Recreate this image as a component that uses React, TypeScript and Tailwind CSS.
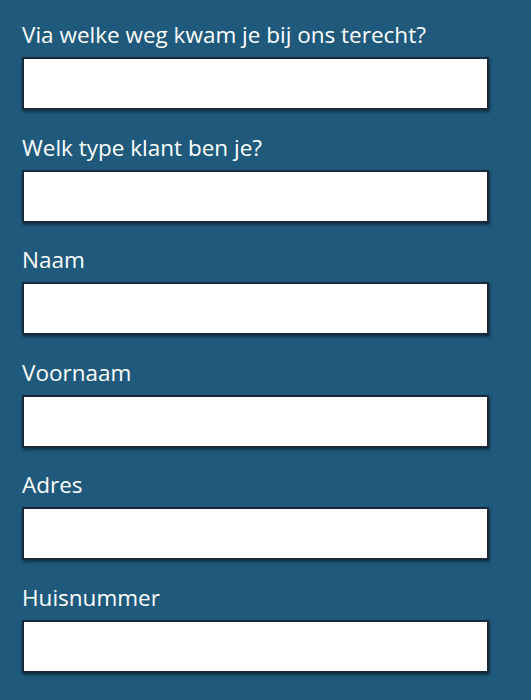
const fields = [
  "Via welke weg kwam je bij ons terecht?",
  "Welk type klant ben je?",
  "Naam",
  "Voornaam",
  "Adres",
  "Huisnummer",
];

export default function App() {
  return (
    <div
      className="min-h-[700px] w-[531px] overflow-hidden bg-[#1f5a7c] px-[22px] pt-[20px]"
      style={{ fontFamily: '"Open Sans", "Noto Sans", sans-serif' }}
    >
      {fields.map((label) => (
        <div key={label} className="mb-[22.6px] flex flex-col">
          <label className="h-[30px] text-[22.5px] leading-[30px] text-white">{label}</label>
          <input
            type="text"
            className="mt-[7px] h-[53px] w-[467px] border-2 border-[#16283a] bg-white shadow-[1px_2px_3px_rgba(0,0,0,0.45)] outline-none"
          />
        </div>
      ))}
    </div>
  );
}
